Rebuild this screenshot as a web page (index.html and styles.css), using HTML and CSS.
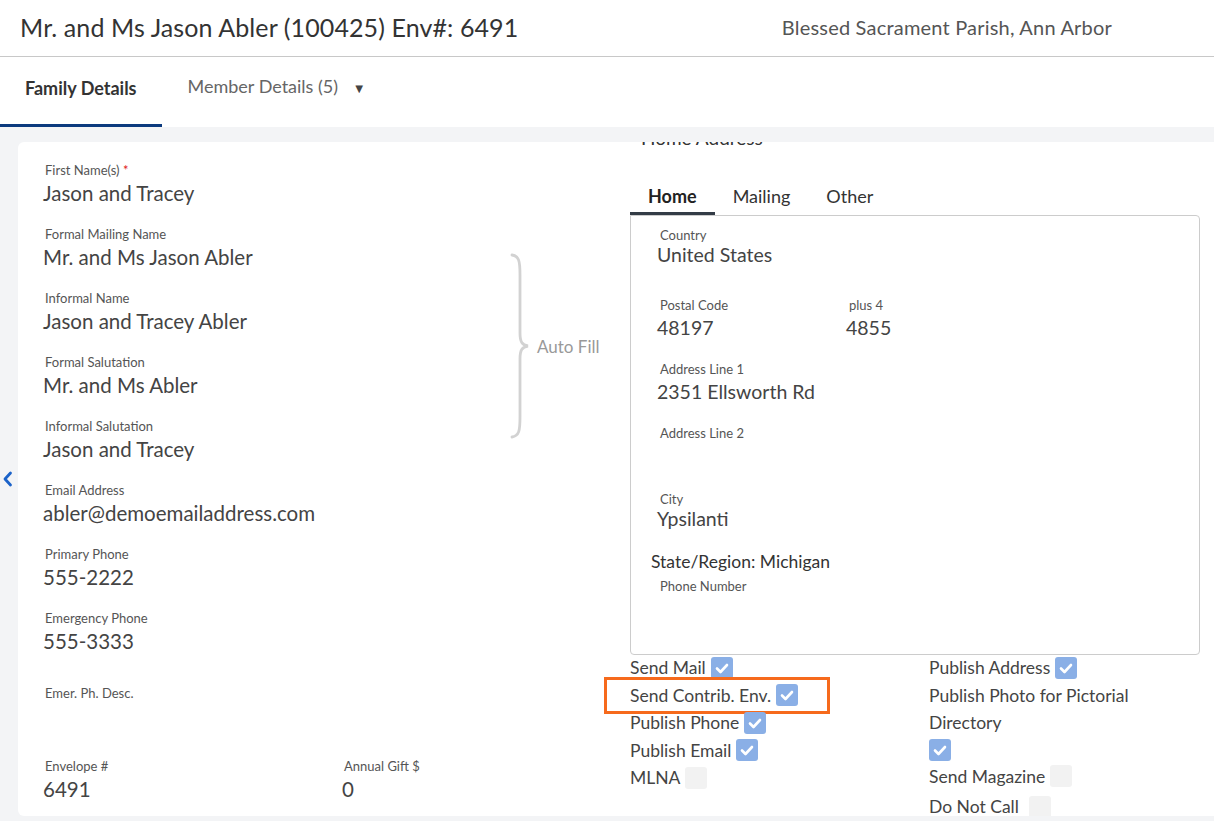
FILE: index.html
```html
<!DOCTYPE html>
<html lang="en">
<head>
    <meta charset="UTF-8">
    <title>Family Details</title>
    <link rel="stylesheet" href="styles.css">
</head>
<body>
    <header class="topbar">
        <h1 class="family-title">Mr. and Ms Jason Abler (100425) Env#: 6491</h1>
        <div class="parish">Blessed Sacrament Parish, Ann Arbor</div>
    </header>

    <nav class="main-tabs">
        <div class="main-tab active">Family Details</div>
        <div class="main-tab">Member Details (5) <span class="caret">&#9660;</span></div>
    </nav>

    <main class="page">
        <div class="gutter">
            <svg class="back-arrow" width="11" height="16" viewBox="0 0 11 16">
                <path d="M8.5 2 L3 8 L8.5 14" fill="none" stroke="#1b62c9" stroke-width="2.8" stroke-linecap="round" stroke-linejoin="round"/>
            </svg>
        </div>

        <section class="card">
            <div class="left-col">
                <div class="field">
                    <div class="label">First Name(s) <span class="req">*</span></div>
                    <div class="value">Jason and Tracey</div>
                </div>
                <div class="field">
                    <div class="label">Formal Mailing Name</div>
                    <div class="value">Mr. and Ms Jason Abler</div>
                </div>
                <div class="field">
                    <div class="label">Informal Name</div>
                    <div class="value">Jason and Tracey Abler</div>
                </div>
                <div class="field">
                    <div class="label">Formal Salutation</div>
                    <div class="value">Mr. and Ms Abler</div>
                </div>
                <div class="field">
                    <div class="label">Informal Salutation</div>
                    <div class="value">Jason and Tracey</div>
                </div>
                <div class="field">
                    <div class="label">Email Address</div>
                    <div class="value">abler@demoemailaddress.com</div>
                </div>
                <div class="field">
                    <div class="label">Primary Phone</div>
                    <div class="value">555-2222</div>
                </div>
                <div class="field">
                    <div class="label">Emergency Phone</div>
                    <div class="value">555-3333</div>
                </div>
                <div class="field field-desc">
                    <div class="label">Emer. Ph. Desc.</div>
                </div>
                <div class="field-row">
                    <div class="field">
                        <div class="label">Envelope #</div>
                        <div class="value">6491</div>
                    </div>
                    <div class="field">
                        <div class="label">Annual Gift $</div>
                        <div class="value">0</div>
                    </div>
                </div>
            </div>

            <div class="autofill">
                <svg class="brace" width="22" height="186" viewBox="0 0 22 186">
                    <path d="M3 2 C10 3 11 8 11 22 L11 80 C11 89 13 92 19 93 C13 94 11 97 11 106 L11 164 C11 178 10 183 3 184" fill="none" stroke="#d2d2d2" stroke-width="2.8" stroke-linecap="round"/>
                </svg>
                <span class="autofill-text">Auto Fill</span>
            </div>

            <div class="right-col">
                <h2 class="section-title">Home Address</h2>
                <div class="addr-tabs">
                    <div class="addr-tab active">Home</div>
                    <div class="addr-tab">Mailing</div>
                    <div class="addr-tab">Other</div>
                </div>
                <div class="addr-box">
                    <div class="field f-country">
                        <div class="label">Country</div>
                        <div class="value">United States</div>
                    </div>
                    <div class="field-row zip-row">
                        <div class="field">
                            <div class="label">Postal Code</div>
                            <div class="value">48197</div>
                        </div>
                        <div class="field">
                            <div class="label">plus 4</div>
                            <div class="value">4855</div>
                        </div>
                    </div>
                    <div class="field">
                        <div class="label">Address Line 1</div>
                        <div class="value">2351 Ellsworth Rd</div>
                    </div>
                    <div class="field f-line2">
                        <div class="label">Address Line 2</div>
                        <div class="value"></div>
                    </div>
                    <div class="field f-city">
                        <div class="label">City</div>
                        <div class="value">Ypsilanti</div>
                    </div>
                    <div class="state">State/Region: Michigan</div>
                    <div class="field f-phone">
                        <div class="label">Phone Number</div>
                        <div class="value"></div>
                    </div>
                </div>

                <div class="flags">
                    <div class="flag-col">
                        <div class="flag">Send Mail <span class="check on"></span></div>
                        <div class="flag highlight">Send Contrib. Env. <span class="check on"></span></div>
                        <div class="flag">Publish Phone <span class="check on"></span></div>
                        <div class="flag">Publish Email <span class="check on"></span></div>
                        <div class="flag">MLNA <span class="check"></span></div>
                    </div>
                    <div class="flag-col">
                        <div class="flag">Publish Address <span class="check on"></span></div>
                        <div class="flag flag-wrap">
                            <span class="flag-text">Publish Photo for Pictorial Directory</span>
                            <span class="check on"></span>
                        </div>
                        <div class="flag">Send Magazine <span class="check"></span></div>
                        <div class="flag flag-last">Do Not Call <span class="check gap"></span></div>
                    </div>
                </div>
            </div>
        </section>
    </main>
</body>
</html>
```

FILE: styles.css
```css
* {
    box-sizing: border-box;
}
body {
    margin: 0;
    height: 821px;
    overflow: hidden;
    font-family: Lato, "Open Sans", sans-serif;
    background-color: #f3f4f6;
    color: #444;
}
.topbar {
    display: flex;
    align-items: center;
    height: 57px;
    padding: 0 20px 3px;
    background: white;
    border-bottom: 1px solid #c8c8c8;
}
.family-title {
    margin: 0;
    font-size: 25px;
    letter-spacing: 0.1px;
    font-weight: normal;
    color: #333;
}
.parish {
    margin-left: auto;
    margin-right: 82px;
    font-size: 20px;
    letter-spacing: 0.2px;
    color: #555;
}
.main-tabs {
    display: flex;
    height: 70px;
    background: white;
}
.main-tab {
    padding: 18px 25px 0 26px;
    font-size: 18px;
    line-height: 22px;
    color: #666;
}
.main-tab.active {
    padding: 20px 25px 0;
    font-weight: bold;
    color: #333;
    border-bottom: 3px solid #0b3a7e;
}
.caret {
    margin-left: 10px;
    font-size: 13px;
    color: #444;
}
.page {
    display: flex;
    padding-top: 15px;
    height: 689px;
}
.gutter {
    width: 18px;
    display: flex;
    align-items: center;
    padding-left: 2px;
}
.card {
    flex: 1;
    display: grid;
    grid-template-columns: 462px 125px 570px;
    padding: 20px 14px 0 25px;
    height: 674px;
    background: white;
    border-radius: 6px 0 0 6px;
    overflow: hidden;
}
.field {
    margin-bottom: 21px;
}
.label {
    padding-left: 2px;
    font-size: 13px;
    line-height: 16px;
    color: #555;
}
.req {
    color: #e02020;
}
.value {
    margin-top: 3px;
    font-size: 20.5px;
    line-height: 24px;
    color: #444;
    min-height: 24px;
}
.field-desc {
    margin-top: 32px;
    margin-bottom: 57px;
}
.field-row {
    display: flex;
}
.field-row .field {
    flex-shrink: 0;
    width: 299px;
}
.autofill {
    display: flex;
    align-items: center;
    align-self: start;
    margin-top: 91px;
    padding-left: 4px;
}
.autofill-text {
    margin-left: 6px;
    font-size: 17px;
    color: #999;
}
.right-col {
    display: flex;
    flex-direction: column;
}
.section-title {
    margin: -35px 0 0 11px;
    font-size: 19px;
    line-height: 22px;
    font-weight: normal;
    color: #333;
}
.addr-tabs {
    display: flex;
    margin-top: 36px;
}
.addr-tab {
    padding: 0 18px 5px;
    font-size: 18px;
    line-height: 22px;
    color: #333;
    border-bottom: 3px solid transparent;
}
.addr-tab.active {
    font-weight: bold;
    color: #222;
    border-bottom-color: #333c46;
}
.addr-box {
    height: 440px;
    padding: 11px 27px 0 27px;
    border: 1px solid #ccc;
    border-radius: 0 4px 4px 4px;
}
.addr-box .value {
    margin-left: -1px;
    font-size: 19.5px;
}
.f-country {
    margin-bottom: 30px;
}
.f-country .value,
.f-city .value {
    margin-top: 0;
}
.zip-row .field {
    width: 189px;
}
.f-line2 {
    margin-bottom: 23px;
}
.f-city {
    margin-bottom: 20px;
}
.state {
    margin-left: -7px;
    font-size: 17.5px;
    line-height: 22px;
    color: #333;
    margin-bottom: 5px;
}
.flags {
    display: grid;
    grid-template-columns: 299px 1fr;
    margin-top: -1px;
}
.flag {
    position: relative;
    display: flex;
    align-items: center;
    gap: 5px;
    height: 27.5px;
    font-size: 17.5px;
    color: #444;
}
.flag-wrap {
    flex-direction: column;
    align-items: flex-start;
    height: auto;
    gap: 0;
}
.flag-wrap .flag-text {
    width: 215px;
    line-height: 27px;
}
.flag-wrap .check {
    margin: 3px 0 2px;
}
.flag-last {
    margin-top: 3px;
}
.check {
    display: inline-block;
    width: 22px;
    height: 22px;
    border-radius: 3px;
    background: #f2f2f2;
}
.check.gap {
    margin-left: 5px;
}
.check.on {
    background: #8aafe6 url("data:image/svg+xml,%3Csvg xmlns='http://www.w3.org/2000/svg' width='22' height='22'%3E%3Cpath d='M6 11.5 L9.5 15 L16 8' fill='none' stroke='white' stroke-width='2.6' stroke-linecap='round' stroke-linejoin='round'/%3E%3C/svg%3E") no-repeat center;
}
/* orange annotation round the contribution row */
.highlight::after {
    content: "";
    position: absolute;
    top: -5px;
    bottom: -5px;
    left: -26px;
    width: 220px;
    border: 3px solid #f66a1c;
}
```
